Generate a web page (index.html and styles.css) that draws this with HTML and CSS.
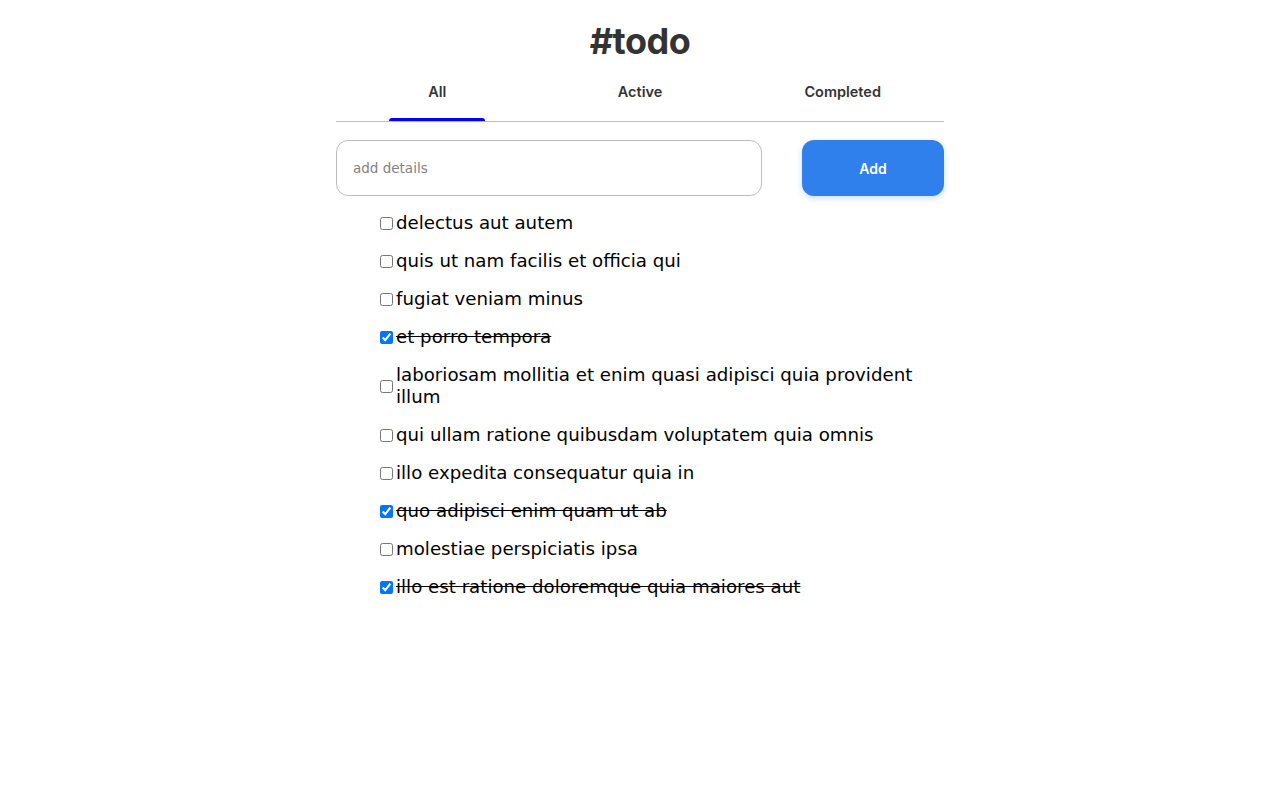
FILE: index.html
```html
<!DOCTYPE html>
<html lang="en">
<head>
<meta charset="utf-8">
<title>#todo</title>
<link rel="stylesheet" href="styles.css">
</head>
<body>
<main class="app">
  <h1 class="title">#todo</h1>
  <nav class="tabs">
    <div class="tab tab-active">All<span class="tab-indicator"></span></div>
    <div class="tab">Active</div>
    <div class="tab">Completed</div>
  </nav>
  <form class="add-row">
    <input class="add-input" type="text" placeholder="add details">
    <button class="add-btn" type="button">Add</button>
  </form>
  <ul class="todo-list">
    <li class="todo"><input type="checkbox"><span class="todo-text">delectus aut autem</span></li>
    <li class="todo"><input type="checkbox"><span class="todo-text">quis ut nam facilis et officia qui</span></li>
    <li class="todo"><input type="checkbox"><span class="todo-text">fugiat veniam minus</span></li>
    <li class="todo done"><input type="checkbox" checked><span class="todo-text">et porro tempora</span></li>
    <li class="todo"><input type="checkbox"><span class="todo-text">laboriosam mollitia et enim quasi adipisci quia provident illum</span></li>
    <li class="todo"><input type="checkbox"><span class="todo-text">qui ullam ratione quibusdam voluptatem quia omnis</span></li>
    <li class="todo"><input type="checkbox"><span class="todo-text">illo expedita consequatur quia in</span></li>
    <li class="todo done"><input type="checkbox" checked><span class="todo-text">quo adipisci enim quam ut ab</span></li>
    <li class="todo"><input type="checkbox"><span class="todo-text">molestiae perspiciatis ipsa</span></li>
    <li class="todo done"><input type="checkbox" checked><span class="todo-text">illo est ratione doloremque quia maiores aut</span></li>
  </ul>
</main>
</body>
</html>
```
FILE: styles.css
```css
html, body {
  margin: 0;
  padding: 0;
  background: #ffffff;
}

body {
  font-family: "DejaVu Sans", "Noto Sans", sans-serif;
  color: #000;
}

.app {
  width: 608px;
  margin: 0 auto;
}

.title {
  margin: 19px 0 0;
  font-family: Inter, "Noto Sans", sans-serif;
  font-size: 36px;
  font-weight: 700;
  line-height: 44px;
  color: #333333;
  text-align: center;
  letter-spacing: -0.5px;
}

.tabs {
  display: flex;
  border-bottom: 1px solid #bdbdbd;
}

.tab {
  flex: 1;
  position: relative;
  height: 58px;
  box-sizing: border-box;
  padding-top: 20px;
  font-family: Inter, "Noto Sans", sans-serif;
  font-size: 14.5px;
  font-weight: 600;
  line-height: 18px;
  color: #333333;
  text-align: center;
}

.tab-indicator {
  position: absolute;
  left: 50%;
  bottom: 0;
  width: 96px;
  height: 3px;
  margin-left: -48px;
  background: #0000ff;
  border-radius: 4px 4px 0 0;
}

.add-row {
  display: flex;
  justify-content: space-between;
  margin: 18px 0 0;
}

.add-input {
  width: 426px;
  height: 56px;
  box-sizing: border-box;
  padding: 0 16px;
  border: 1px solid #bdbdbd;
  border-radius: 12px;
  font-family: "DejaVu Sans", sans-serif;
  font-size: 13.5px;
  color: #333;
  outline: none;
}

.add-input::placeholder {
  color: #828282;
}

.add-btn {
  width: 142px;
  height: 56px;
  border: none;
  border-radius: 12px;
  background: #2f80ed;
  box-shadow: 0 2px 6px rgba(127, 177, 243, 0.45);
  color: #ffffff;
  font-family: Inter, "Noto Sans", sans-serif;
  font-size: 14px;
  font-weight: 600;
  cursor: pointer;
}

.todo-list {
  list-style: none;
  margin: 16px 0 0;
  padding: 0 0 0 40px;
}

.todo {
  display: flex;
  align-items: center;
  margin-bottom: 16px;
}

.todo input {
  flex: none;
  width: 13px;
  height: 13px;
  margin: 3px 3px 3px 4px;
}

.todo-text {
  font-size: 18.2px;
  line-height: 22px;
}

.done .todo-text {
  text-decoration: line-through;
}
```
